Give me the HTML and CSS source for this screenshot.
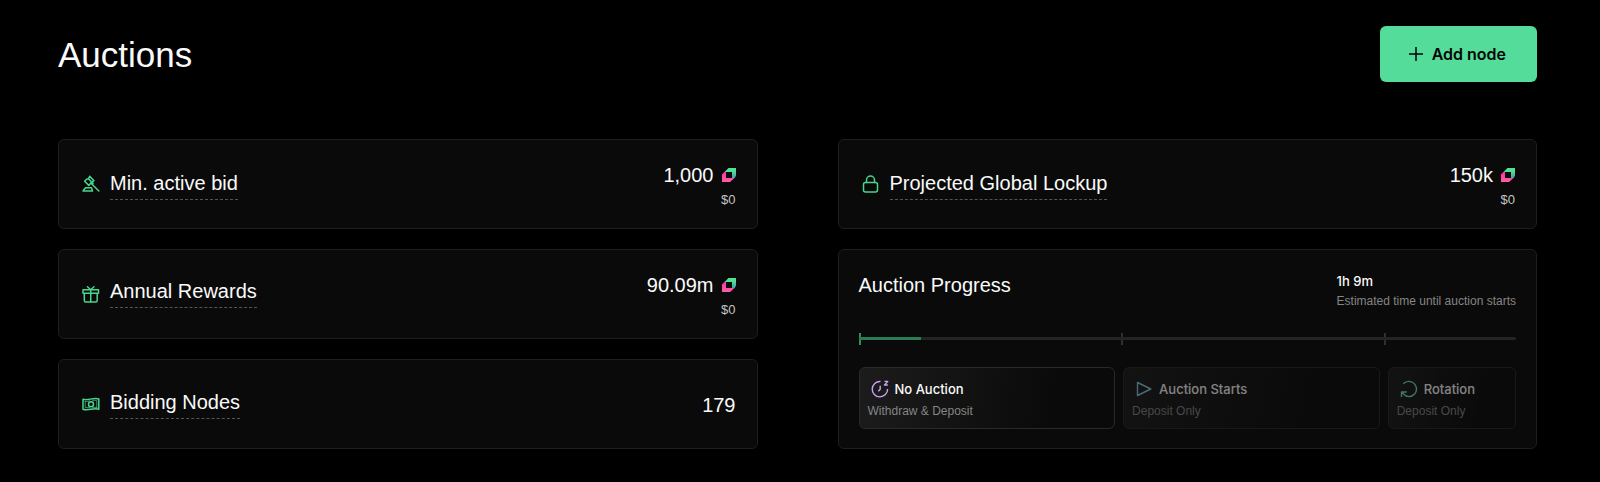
FILE: index.html
```html
<!DOCTYPE html>
<html lang="en">
<head>
<meta charset="utf-8">
<title>Auctions</title>
<link rel="stylesheet" href="styles.css">
</head>
<body>
<svg class="defs" aria-hidden="true">
  <defs>
    <linearGradient id="tokenTop" x1="0" y1="0" x2="0" y2="1"><stop offset="0.3" stop-color="#53e094"/><stop offset="1" stop-color="#4b9bb0"/></linearGradient>
    <linearGradient id="tokenBottom" x1="0" y1="0" x2="0" y2="1"><stop offset="0" stop-color="#ff2fa8"/><stop offset="1" stop-color="#ff5fa2"/></linearGradient>
    <symbol id="token" viewBox="0 0 14 14">
      <path d="M6.500 0H14V7.500L12.800 10H10V4H2.500Z" fill="url(#tokenTop)"/>
      <path d="M0 14V6.500L2.300 4H4V10H12.500L8 14Z" fill="url(#tokenBottom)"/>
    </symbol>
  </defs>
</svg>
<main class="page">
  <header class="page-header">
    <h1 class="page-title">Auctions</h1>
    <button class="add-button" type="button">
      <svg class="add-icon" viewBox="0 0 14 14" aria-hidden="true"><path d="M7 0V14M0 7H14"/></svg>
      Add node
    </button>
  </header>

  <div class="columns">
    <section class="card stat bid">
      <svg class="icon" viewBox="0 0 18 18" aria-hidden="true"><path d="M7.700 1.400 12 5.700 9.800 7.200 11 8.400M7.700 1.400 6.500 3.700 4.600 4.200 2.600 6.200 6.800 10.400 8.600 8.300 9.800 7.200M6.500 3.700 9.800 7.200M8.800 8 16.800 16M3.500 12.800H9.500L10.500 16H1Z"/></svg>
      <span class="label label-low">Min. active bid</span>
      <div class="amount">
        <span class="value">1,000 <svg class="token" aria-hidden="true"><use href="#token"/></svg></span>
        <span class="fiat">$0</span>
      </div>
    </section>

    <section class="card stat lockup">
      <svg class="icon" viewBox="0 0 18 18" aria-hidden="true"><rect x="1.500" y="7.500" width="14" height="9.500" rx="2"/><path d="M4.500 7.500V5a4 4 0 0 1 8 0V7.500"/></svg>
      <span class="label label-low">Projected Global Lockup</span>
      <div class="amount">
        <span class="value">150k <svg class="token" aria-hidden="true"><use href="#token"/></svg></span>
        <span class="fiat">$0</span>
      </div>
    </section>

    <section class="card stat rewards">
      <svg class="icon" viewBox="0 0 18 18" aria-hidden="true"><path d="M1 4.700H16.500V8.200H1ZM2.300 8.200V15.500a1.500 1.500 0 0 0 1.500 1.500H13.700a1.500 1.500 0 0 0 1.500-1.500V8.200M8.750 4.700V17M8.750 4.700 5.500 1.700M8.750 4.700 12 1.700"/></svg>
      <span class="label">Annual Rewards</span>
      <div class="amount">
        <span class="value">90.09m <svg class="token" aria-hidden="true"><use href="#token"/></svg></span>
        <span class="fiat">$0</span>
      </div>
    </section>

    <section class="card stat nodes">
      <svg class="icon" viewBox="0 0 18 18" aria-hidden="true"><path d="M1 4.200C6 6 11 2.200 16.800 4V14.200C11 12.600 6 16.200 1 14.200Z"/><path class="note-inner" d="M3.200 6.300C5 6.800 6.500 6.300 7.500 5.800M10.500 12.600C12 12.200 13.500 12.200 14.800 12.500M3.200 6.300V12.400C5 12.900 6.500 12.500 7.500 12.500M14.800 12.500V5.600C13.500 5.200 12 5.300 10.500 5.800"/><circle cx="9" cy="9.200" r="2.500"/></svg>
      <span class="label">Bidding Nodes</span>
      <div class="amount amount-single"><span class="value">179</span></div>
    </section>

    <section class="card progress">
      <header class="progress-header">
        <h2 class="progress-title">Auction Progress</h2>
        <div class="countdown">
          <strong class="countdown-time">1h 9m</strong>
          <span class="countdown-note">Estimated time until auction starts</span>
        </div>
      </header>
      <div class="timeline">
        <div class="track"><div class="track-fill" style="width: 9.5%"></div></div>
        <div class="segment segment-active"></div>
        <div class="segment"></div>
        <div class="segment segment-short"></div>
      </div>
      <div class="stages">
        <div class="stage">
          <div class="stage-name">
            <svg class="stage-icon" viewBox="0 0 18 18" aria-hidden="true"><path class="quiet" d="M9.500 1.500A7.700 7.700 0 1 0 16.600 9M9.200 5.800V9.200L7.300 11.200M13.500 1.400H16.800L13.500 5H16.800"/></svg>
            No Auction
          </div>
          <span class="stage-note">Withdraw &amp; Deposit</span>
        </div>
        <div class="stage stage-dim">
          <div class="stage-name">
            <svg class="stage-icon" viewBox="0 0 18 18" aria-hidden="true"><path class="start" d="M2.500 2.500V15.500L15.800 9Z"/></svg>
            Auction Starts
          </div>
          <span class="stage-note">Deposit Only</span>
        </div>
        <div class="stage stage-dim">
          <div class="stage-name">
            <svg class="stage-icon" viewBox="0 0 18 18" aria-hidden="true"><path class="rotate" d="M3.300 3.800A7.600 7.600 0 1 1 7.500 16.500M1.500 17V12H6.800M1.500 12 5.200 15.400A7.600 7.600 0 0 0 9 16.600"/></svg>
            Rotation
          </div>
          <span class="stage-note">Deposit Only</span>
        </div>
      </div>
    </section>
  </div>
</main>
</body>
</html>
```
FILE: styles.css
```css
* { box-sizing: border-box; }
body {
  margin: 0;
  background: #000;
  color: #fafafa;
  font-family: "Liberation Sans", Arial, sans-serif;
}
.defs { position: absolute; width: 0; height: 0; }
.page { padding: 26px 63px 32px 58px; }
.page-header {
  display: flex;
  align-items: center;
  justify-content: space-between;
  margin-bottom: 57px;
}
.page-title { margin: 0; padding-top: 2px; font-size: 35px; line-height: 40px; font-weight: 400; }
.add-button {
  display: flex;
  align-items: center;
  gap: 9px;
  height: 56px;
  padding: 0 31px 0 29px;
  border: 0;
  border-radius: 6px;
  background: #53dc9a;
  color: #050505;
  font: 600 16px/24px Inter, sans-serif;
}
.add-icon { width: 14px; height: 14px; fill: none; stroke: currentColor; stroke-width: 1.5; }

.columns {
  display: grid;
  grid-template-columns: 1fr 1fr;
  grid-template-areas: "bid lockup" "rewards progress" "nodes progress";
  grid-auto-rows: minmax(90px, auto);
  gap: 20px 80px;
}
.bid { grid-area: bid; }
.lockup { grid-area: lockup; }
.rewards { grid-area: rewards; }
.nodes { grid-area: nodes; }
.progress { grid-area: progress; }
.card {
  border: 1px solid #1e1e1e;
  border-radius: 6px;
  background: #0a0a0a;
  padding: 20px;
}
.stat { display: flex; align-items: center; padding: 0 21px 0 23px; }
.icon {
  width: 18px;
  height: 18px;
  margin-right: 10px;
  fill: none;
  stroke: #48d58e;
  stroke-width: 1.5;
  stroke-linejoin: round;
  stroke-linecap: round;
}
.note-inner { stroke-width: 1; opacity: 0.7; }
.label {
  padding-bottom: 4px;
  border-bottom: 1px dashed #555;
  font-size: 20px;
  line-height: 24px;
}
.label-low { margin-top: 2px; }
.rewards .label { margin-bottom: 1px; }
.amount {
  display: flex;
  flex-direction: column;
  align-items: flex-end;
  gap: 5px;
  margin-left: auto;
  padding-top: 2px;
}
.amount-single { padding-top: 1px; }
.value { display: flex; align-items: center; gap: 8px; font-size: 20px; line-height: 24px; }
.token { width: 14px; height: 14px; }
.fiat { color: #c4c4c4; font-size: 13px; line-height: 16px; }

.progress { display: flex; flex-direction: column; padding-bottom: 18px; }
.progress-header { display: flex; justify-content: space-between; padding-top: 2px; }
.progress-title { margin: 0; font-size: 20px; line-height: 26px; font-weight: 400; }
.countdown { display: flex; flex-direction: column; gap: 2px; }
.countdown-time { font: 500 13px/18px Inter, sans-serif; }
.countdown-note { color: #858585; font-size: 12px; line-height: 18px; }
.timeline { position: relative; display: flex; height: 12px; margin-top: 23px; }
.track {
  position: absolute;
  inset: 4px 0 auto;
  height: 3px;
  border-radius: 2px;
  background: #242424;
}
.track-fill { height: 3px; background: #2a7c55; }
.segment { flex: 2; border-left: 2px solid #303030; }
.segment-active { border-color: #2f8d60; }
.segment-short { flex: 1; }
.stages { display: grid; grid-template-columns: 2fr 2fr 1fr; gap: 8px; margin-top: 22px; }
.stage {
  padding: 11px 8px 9px;
  border: 1px solid #292929;
  border-radius: 6px;
  background: linear-gradient(100deg, #1c1c1c, #0a0a0a 75%);
}
.stage-dim { opacity: 0.5; }
.stage-name {
  display: flex;
  align-items: center;
  gap: 6px;
  padding-left: 3px;
  margin-bottom: 4px;
  font: 500 13px/20px Inter, sans-serif;
}
.stage-icon { width: 18px; height: 18px; fill: none; stroke-width: 1.4; stroke-linejoin: round; }
.quiet { stroke: #c9a2f5; }
.start { stroke: #8cc8e8; }
.rotate { stroke: #7be3b0; }
.stage-note { display: block; color: #858585; font-size: 12px; line-height: 16px; }
```
